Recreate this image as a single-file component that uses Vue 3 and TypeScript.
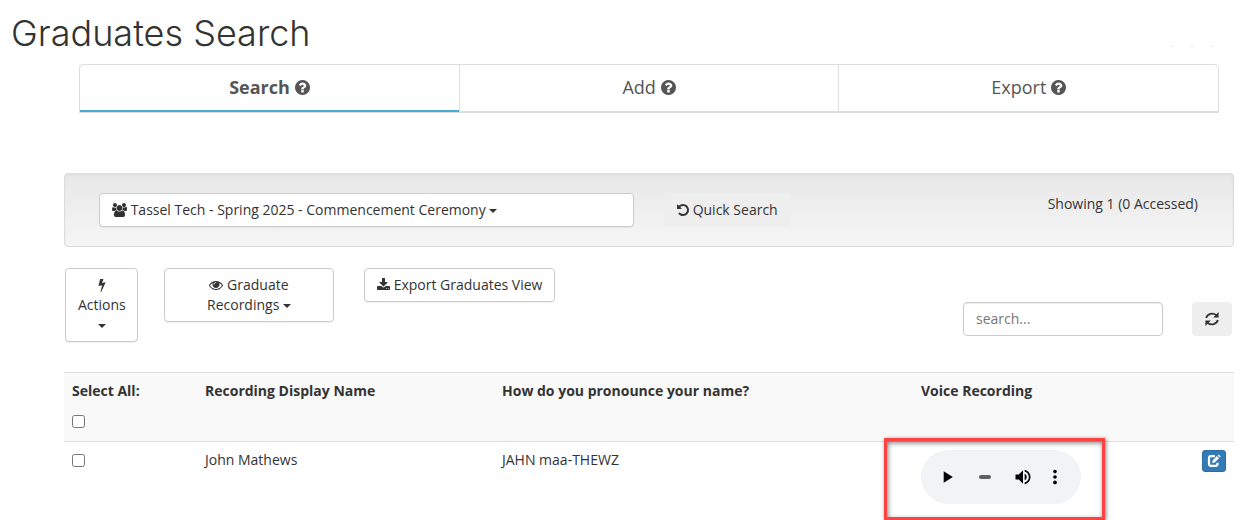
<script setup lang="ts">
import { computed, ref } from 'vue'

interface Graduate {
  id: number
  name: string
  pronunciation: string
  selected: boolean
}

const tabs = ['Search', 'Add', 'Export']
const activeTab = ref('Search')
const query = ref('')
const position = ref(0)
const graduates = ref<Graduate[]>([
  { id: 1, name: 'John Mathews', pronunciation: 'JAHN maa-THEWZ', selected: false },
])

const allSelected = computed({
  get: () => graduates.value.every((g) => g.selected),
  set: (value: boolean) => graduates.value.forEach((g) => (g.selected = value)),
})

const icons = {
  question:
    'M1024 1376v-192q0-14-9-23t-23-9h-192q-14 0-23 9t-9 23v192q0 14 9 23t23 9h192q14 0 23-9t9-23zm256-672q0-88-55.5-163t-138.5-116-170-41q-243 0-371 213-15 24 8 42l132 100q7 6 19 6 16 0 25-12 53-68 86-92 34-24 86-24 48 0 85.5 26t37.5 59q0 38-20 61t-68 45q-63 28-115.5 86.5t-52.5 125.5v36q0 14 9 23t23 9h192q14 0 23-9t9-23q0-19 21.5-49.5t54.5-49.5q32-18 49-28.5t46-35 44.5-48 28-60.5 12.5-81zm384 192q0 209-103 385.5t-279.5 279.5-385.5 103-385.5-103-279.5-279.5-103-385.5 103-385.5 279.5-279.5 385.5-103 385.5 103 279.5 279.5 103 385.5z',
  users:
    'M657 896q-162 5-265 128h-134q-82 0-138-40.5t-56-118.5q0-353 124-353 6 0 43.5 21t97.5 42.5 119 21.5q67 0 133-23-5 37-5 66 0 159 93 293zm1071 637q0 120-73 189.5t-194 69.5h-874q-121 0-194-69.5t-73-189.5q0-53 3.5-103.5t14-109 26.5-108.5 43-97.5 62-81 85.5-53.5 111.5-20q10 0 43 21.5t73 48 107 48 135 21.5 135-21.5 107-48 73-48 43-21.5q61 0 111.5 20t85.5 53.5 62 81 43 97.5 26.5 108.5 14 109 3.5 103.5zm-1024-1277q0 106-75 181t-181 75-181-75-75-181 75-181 181-75 181 75 75 181zm704 384q0 159-112.5 271.5t-271.5 112.5-271.5-112.5-112.5-271.5 112.5-271.5 271.5-112.5 271.5 112.5 112.5 271.5zm576 225q0 78-56 118.5t-138 40.5h-134q-103-123-265-128 93-134 93-293 0-29-5-66 66 23 133 23 59 0 119-21.5t97.5-42.5 43.5-21q124 0 124 353zm-128-609q0 106-75 181t-181 75-181-75-75-181 75-181 181-75 181 75 75 181z',
  undo:
    'M1664 896q0 156-61 298t-164 245-245 164-298 61q-172 0-327-72.5t-264-204.5q-7-10-6.5-22.5t8.5-20.5l137-138q10-9 25-9 16 2 23 12 73 95 179 147t225 52q104 0 198.5-40.5t163.5-109.5 109.5-163.5 40.5-198.5-40.5-198.5-109.5-163.5-163.5-109.5-198.5-40.5q-98 0-188 35.5t-160 101.5l137 138q31 30 14 69-17 40-59 40h-448q-26 0-45-19t-19-45v-448q0-42 40-59 39-17 69 14l130 129q107-101 244.5-156.5t284.5-55.5q156 0 298 61t245 164 164 245 61 298z',
  bolt:
    'M1333 566q18 20 7 44l-540 1157q-13 25-42 25-4 0-14-2-17-5-25.5-19t-4.5-30l197-808-406 101q-4 1-12 1-18 0-31-11-18-15-13-39l201-825q4-14 16-23t28-9h328q19 0 32 12.5t13 29.5q0 8-5 18l-171 463 396-98q8-2 12-2 19 0 34 15z',
  eye:
    'M1664 960q-152-236-381-353 61 104 61 225 0 185-131.5 316.5t-316.5 131.5-316.5-131.5-131.5-316.5q0-121 61-225-229 117-381 353 133 205 333.5 326.5t434.5 121.5 434.5-121.5 333.5-326.5zm-720-384q0-20-14-34t-34-14q-125 0-214.5 89.5t-89.5 214.5q0 20 14 34t34 14 34-14 14-34q0-86 61-147t147-61q20 0 34-14t14-34zm848 384q0 34-20 69-140 230-376.5 368.5t-499.5 138.5-499.5-139-376.5-368q-20-35-20-69t20-69q140-229 376.5-368t499.5-139 499.5 139 376.5 368q20 35 20 69z',
  download:
    'M1344 1344q0-26-19-45t-45-19-45 19-19 45 19 45 45 19 45-19 19-45zm256 0q0-26-19-45t-45-19-45 19-19 45 19 45 45 19 45-19 19-45zm128-224v320q0 40-28 68t-68 28h-1472q-40 0-68-28t-28-68v-320q0-40 28-68t68-28h465l135 136q58 56 136 56t136-56l136-136h464q40 0 68 28t28 68zm-325-569q17 41-14 70l-448 448q-18 19-45 19t-45-19l-448-448q-31-29-14-70 17-39 59-39h256v-448q0-26 19-45t45-19h256q26 0 45 19t19 45v448h256q42 0 59 39z',
}
</script>

<template>
  <main class="page">
    <header class="top">
      <h1>Graduates Search</h1>
      <div class="marks" aria-hidden="true"><i></i><i></i><i></i></div>
    </header>

    <nav class="tabs">
      <button
        v-for="tab in tabs"
        :key="tab"
        type="button"
        class="tab"
        :class="{ active: tab === activeTab }"
        @click="activeTab = tab"
      >
        {{ tab }}
        <svg class="icon large" viewBox="128 128 1536 1536"><path :d="icons.question" /></svg>
      </button>
    </nav>

    <section class="filters">
      <button type="button" class="btn ceremony">
        <svg class="icon wide" viewBox="64 0 1920 1792"><path :d="icons.users" /></svg>
        Tassel Tech - Spring 2025 - Commencement Ceremony <span class="caret"></span>
      </button>
      <button type="button" class="btn plain">
        <svg class="icon narrow" viewBox="128 0 1536 1792"><path :d="icons.undo" /></svg>
        Quick Search
      </button>
      <p class="count">Showing 1 (0 Accessed)</p>
    </section>

    <section class="toolbar">
      <button type="button" class="btn actions">
        <svg class="icon" viewBox="0 0 1792 1792"><path :d="icons.bolt" /></svg>
        Actions <span class="caret"></span>
      </button>
      <button type="button" class="btn recordings">
        <svg class="icon" viewBox="0 0 1792 1792"><path :d="icons.eye" /></svg>
        Graduate Recordings <span class="caret"></span>
      </button>
      <button type="button" class="btn">
        <svg class="icon medium" viewBox="64 0 1664 1792"><path :d="icons.download" /></svg>
        Export Graduates View
      </button>
      <div class="lookup">
        <input v-model="query" type="text" placeholder="search..." aria-label="Search graduates" />
        <button type="button" class="btn plain reload" aria-label="Refresh">
          <svg class="icon" viewBox="0 0 14 14">
            <path d="M1.200 6A6 5.500 0 0 1 11.300 3.200M12.800 8A6 5.500 0 0 1 2.700 10.800" fill="none" stroke="currentColor" stroke-width="1.800" />
            <path d="M13.600 0V5.400H8.200ZM.400 14V8.600H5.800Z" />
          </svg>
        </button>
      </div>
    </section>

    <table>
      <colgroup>
        <col class="c-select" />
        <col class="c-name" />
        <col class="c-say" />
        <col />
        <col class="c-edit" />
      </colgroup>
      <thead>
        <tr>
          <th>
            <label for="all">Select All:</label>
            <input id="all" v-model="allSelected" type="checkbox" />
          </th>
          <th>Recording Display Name</th>
          <th>How do you pronounce your name?</th>
          <th>Voice Recording</th>
          <th></th>
        </tr>
      </thead>
      <tbody>
        <tr v-for="g in graduates" :key="g.id">
          <td><input v-model="g.selected" type="checkbox" :aria-label="'Select ' + g.name" /></td>
          <td>{{ g.name }}</td>
          <td>{{ g.pronunciation }}</td>
          <td>
            <div class="recording">
              <div class="player">
                <button type="button" aria-label="Play">
                  <svg viewBox="0 0 24 24"><path d="M8 5v14l11-7z" /></svg>
                </button>
                <input v-model.number="position" type="range" min="0" max="100" aria-label="Position" />
                <button type="button" aria-label="Mute">
                  <svg viewBox="0 0 24 24">
                    <path d="M3 9v6h4l5 5V4L7 9H3zm13.5 3c0-1.77-1.02-3.29-2.5-4.03v8.05c1.48-.73 2.5-2.25 2.5-4.02zM14 3.23v2.06c2.89.86 5 3.54 5 6.71s-2.11 5.85-5 6.71v2.06c4.01-.91 7-4.49 7-8.77s-2.99-7.86-7-8.77z" />
                  </svg>
                </button>
                <button type="button" aria-label="More options">
                  <svg viewBox="0 0 24 24">
                    <circle cx="12" cy="5.500" r="2.200" /><circle cx="12" cy="12" r="2.200" /><circle cx="12" cy="18.500" r="2.200" />
                  </svg>
                </button>
              </div>
              <div class="highlight"></div>
            </div>
          </td>
          <td class="edit-cell">
            <button type="button" class="edit" :aria-label="'Edit ' + g.name">
              <svg viewBox="0 0 14 14">
                <path d="M8 2.200H4Q2 2.200 2 4.200V9.800Q2 11.800 4 11.800H8.600Q10.600 11.800 10.600 9.800V8.800" fill="none" stroke="#fff" stroke-width="2.200" />
                <path d="M5.200 9L5.600 6.400L9.900 2.100L12 4.200L7.700 8.500Z M10.600 1.400L11.600 .400L13.700 2.500L12.700 3.500Z" fill="#fff" />
              </svg>
            </button>
          </td>
        </tr>
      </tbody>
    </table>
  </main>
</template>

<style>
body {
  margin: 0;
  background: #fff;
}
</style>

<style scoped>
* {
  box-sizing: border-box;
}
.page {
  font: 14px/20px 'Open Sans', 'Noto Sans', sans-serif;
  color: #333;
  padding: 0 16px 8px 64px;
}
button,
input {
  font: inherit;
  color: inherit;
  margin: 0;
}
button {
  cursor: pointer;
}
.top {
  position: relative;
  height: 64px;
  margin-left: -53px;
  padding-top: 11px;
}
h1 {
  margin: 0;
  font: 300 36px/44px Inter, sans-serif;
}
.marks {
  position: absolute;
  right: 20px;
  top: 46px;
  display: flex;
  gap: 16px;
}
.marks i {
  width: 4px;
  height: 1px;
  background: #eee;
}
.tabs {
  display: flex;
  margin: 0 15px;
  border: 1px solid #ddd;
  border-radius: 4px 4px 0 0;
}
.tab {
  flex: 1;
  height: 47px;
  padding: 0 0 2px;
  border: 0;
  border-bottom: 1px solid #ddd;
  background: none;
  font-size: 18px;
  line-height: 26px;
  color: #555;
}
.tab + .tab {
  border-left: 1px solid #ddd;
}
.tab.active {
  padding-bottom: 1px;
  border-bottom: 2px solid #4bacd2;
  font-weight: 700;
}
.icon {
  width: 14px;
  height: 14px;
  fill: currentColor;
  vertical-align: -2px;
}
.icon.narrow {
  width: 12px;
}
.icon.medium {
  width: 13px;
}
.icon.wide {
  width: 15px;
}
.icon.large {
  width: 15px;
  height: 15px;
  vertical-align: -1px;
}
.caret {
  display: inline-block;
  vertical-align: middle;
  border-top: 4px solid;
  border-left: 4px solid transparent;
  border-right: 4px solid transparent;
}
.btn {
  padding: 6px 12px;
  border: 1px solid #ccc;
  border-radius: 4px;
  background: #fff;
  box-shadow: 0 1px 1px rgba(0, 0, 0, 0.06);
}
.btn.plain {
  border-color: transparent;
  background: #eee;
  box-shadow: none;
}
.filters {
  display: flex;
  align-items: flex-start;
  gap: 30px;
  margin-top: 60px;
  padding: 19px 35px 19px 34px;
  border: 1px solid #dcdcdc;
  border-radius: 4px;
  background: linear-gradient(#e8e8e8, #f5f5f5);
  box-shadow: inset 0 1px 3px rgba(0, 0, 0, 0.05);
}
.ceremony {
  flex: 0 1 535px;
  text-align: left;
}
.count {
  margin: 1px 0 0 auto;
}
.toolbar {
  display: flex;
  align-items: flex-start;
  margin: 21px 2px 30px 1px;
}
.actions {
  width: 73px;
  margin-right: 26px;
}
.recordings {
  width: 170px;
  padding: 6px 30px;
  margin-right: 30px;
}
.lookup {
  display: flex;
  gap: 29px;
  margin: 34px 0 0 auto;
}
.lookup input {
  width: 200px;
  height: 34px;
  padding: 5px 12px 7px;
  border: 1px solid #ccc;
  border-radius: 4px;
  box-shadow: inset 0 1px 1px rgba(0, 0, 0, 0.075);
}
.lookup input::placeholder {
  color: #777;
}
.reload {
  width: 40px;
}
table {
  width: 100%;
  table-layout: fixed;
  border-collapse: collapse;
}
.c-select {
  width: 133px;
}
.c-name {
  width: 297px;
}
.c-say {
  width: 419px;
}
.c-edit {
  width: 40px;
}
th,
td {
  padding: 8px;
  border-top: 1px solid #ddd;
  text-align: left;
  vertical-align: top;
}
th {
  background: #f9f9f9;
}
th label {
  display: block;
}
input[type='checkbox'] {
  display: block;
  width: 13px;
  height: 13px;
}
th input[type='checkbox'] {
  margin: 14px 0 5px;
}
td input[type='checkbox'] {
  margin-top: 4px;
}
.recording {
  position: relative;
  width: 160px;
}
.player {
  display: flex;
  align-items: center;
  height: 54px;
  padding: 0 10px;
  border-radius: 27px;
  background: #f1f3f4;
}
.player button {
  display: flex;
  align-items: center;
  justify-content: center;
  width: 32px;
  height: 32px;
  padding: 0;
  border: 0;
  background: none;
}
.player svg {
  width: 20px;
  height: 20px;
  fill: #000;
}
.player input {
  appearance: none;
  width: 12px;
  height: 4px;
  margin: 0 16px;
  border-radius: 2px;
  background: #5f6062;
}
.player input::-webkit-slider-thumb {
  appearance: none;
  width: 0;
  height: 0;
}
.highlight {
  position: absolute;
  inset: -12px -24px -16px -37px;
  border: 3px solid #ff4343;
  box-shadow: 1px 1px 4px rgba(0, 0, 0, 0.5), inset 1px 2px 5px rgba(0, 0, 0, 0.5);
  pointer-events: none;
}
.edit-cell {
  text-align: right;
}
.edit {
  display: inline-flex;
  align-items: center;
  justify-content: center;
  width: 24px;
  height: 22px;
  padding: 0;
  border: 1px solid #2e6da4;
  border-radius: 3px;
  background: #337ab7;
}
.edit svg {
  width: 14px;
  height: 14px;
}
</style>
